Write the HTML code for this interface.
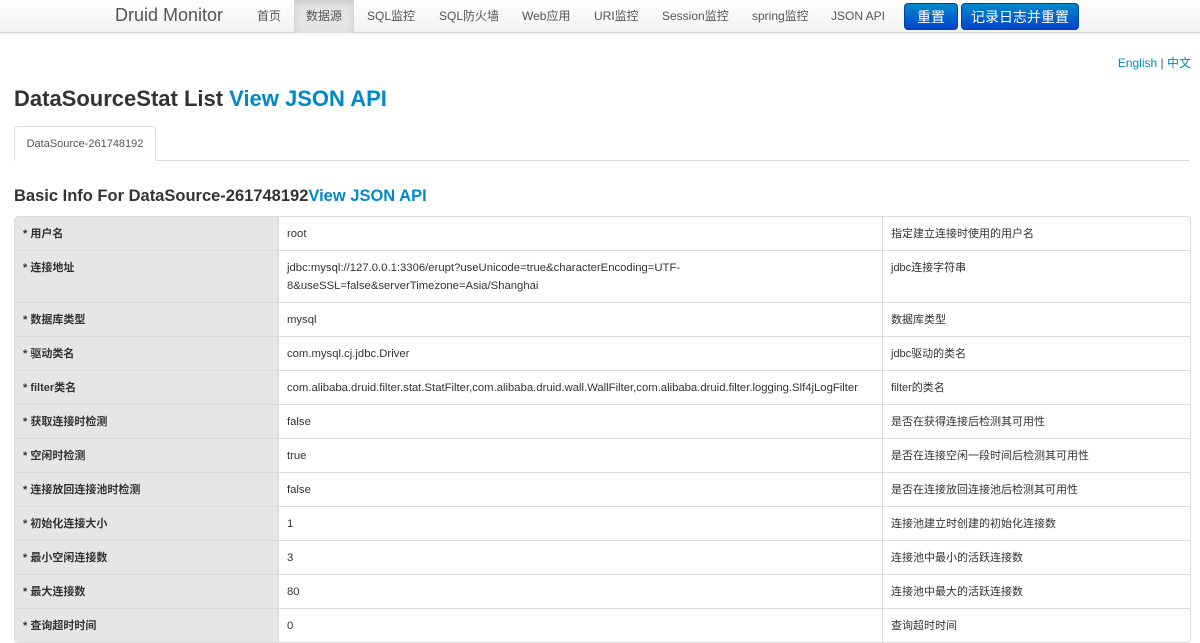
<!DOCTYPE html>
<html><head><meta charset="utf-8"><style>
*{box-sizing:border-box;margin:0;padding:0}
body{width:1200px;height:636px;overflow:hidden;background:#fff;font-family:"Liberation Sans","Noto Sans CJK SC",sans-serif;font-size:12px;color:#333;position:relative}
.nav{position:absolute;left:0;top:0;width:1200px;height:33px;background:linear-gradient(#fff,#f2f2f2);border-bottom:1px solid #d4d4d4;box-shadow:0 1px 4px rgba(0,0,0,.065)}
.brand{position:absolute;left:115px;top:5px;font-size:18px;color:#555}
.nav a{position:absolute;top:0;height:33px;line-height:32px;color:#555;font-size:12px;text-decoration:none}
.act{background:#e5e5e5;box-shadow:inset 0 3px 8px rgba(0,0,0,.12)}
.btn{position:absolute;top:3px;height:27px;line-height:26px;color:#fff;font-size:14px;text-align:center;border-radius:4px;background:linear-gradient(#0088cc,#0044cc);border:1px solid #0044aa}
.lang{position:absolute;right:9px;top:54px;color:#0088cc}
.lang span{color:#555}
h1{position:absolute;left:14px;top:86px;font-size:22px;font-weight:bold;color:#333}
h1 b,h2 b{color:#0088cc}
.tabs{position:absolute;left:14px;top:126px;width:1176px;height:35px;border-bottom:1px solid #ddd}
.tab{position:absolute;left:0;top:0;width:142px;height:35px;border:1px solid #ddd;border-bottom-color:#fff;border-radius:4px 4px 0 0;background:#fff;text-align:center;line-height:34px;color:#555;font-size:11px}
h2{position:absolute;left:14px;top:187px;font-size:16.5px;font-weight:bold}
table{position:absolute;left:14px;top:216px;width:1177px;border-collapse:separate;border-spacing:0;border:1px solid #ddd;border-radius:4px;font-size:11px}
td{padding:8px 8px 7px;line-height:18px;border-top:1px solid #ddd;vertical-align:top}
tr:first-child td{border-top:0}
td.k{width:263px;background:#e6e6e6;font-weight:bold}
td.v{width:604px;border-left:1px solid #ddd;font-size:11.3px}
td.d{border-left:1px solid #ddd}
</style></head><body>
<div class="nav">
<div class="brand">Druid Monitor</div>
<a style="left:257px">首页</a>
<a class="act" style="left:294px;width:60px;text-align:center">数据源</a>
<a style="left:367px">SQL监控</a>
<a style="left:439px">SQL防火墙</a>
<a style="left:522px">Web应用</a>
<a style="left:594px">URI监控</a>
<a style="left:662px">Session监控</a>
<a style="left:752px">spring监控</a>
<a style="left:831px">JSON API</a>
<div class="btn" style="left:904px;width:54px">重置</div>
<div class="btn" style="left:961px;width:118px">记录日志并重置</div>
</div>
<div class="lang">English <span>|</span> 中文</div>
<h1>DataSourceStat List <b>View JSON API</b></h1>
<div class="tabs"><div class="tab">DataSource-261748192</div></div>
<h2>Basic Info For DataSource-261748192<b>View JSON API</b></h2>
<table>
<tr><td class="k">* 用户名</td><td class="v">root</td><td class="d">指定建立连接时使用的用户名</td></tr>
<tr><td class="k">* 连接地址</td><td class="v">jdbc:mysql://127.0.0.1:3306/erupt?useUnicode=true&amp;characterEncoding=UTF-<br>8&amp;useSSL=false&amp;serverTimezone=Asia/Shanghai</td><td class="d">jdbc连接字符串</td></tr>
<tr><td class="k">* 数据库类型</td><td class="v">mysql</td><td class="d">数据库类型</td></tr>
<tr><td class="k">* 驱动类名</td><td class="v">com.mysql.cj.jdbc.Driver</td><td class="d">jdbc驱动的类名</td></tr>
<tr><td class="k">* filter类名</td><td class="v" style="white-space:nowrap">com.alibaba.druid.filter.stat.StatFilter,com.alibaba.druid.wall.WallFilter,com.alibaba.druid.filter.logging.Slf4jLogFilter</td><td class="d">filter的类名</td></tr>
<tr><td class="k">* 获取连接时检测</td><td class="v">false</td><td class="d">是否在获得连接后检测其可用性</td></tr>
<tr><td class="k">* 空闲时检测</td><td class="v">true</td><td class="d">是否在连接空闲一段时间后检测其可用性</td></tr>
<tr><td class="k">* 连接放回连接池时检测</td><td class="v">false</td><td class="d">是否在连接放回连接池后检测其可用性</td></tr>
<tr><td class="k">* 初始化连接大小</td><td class="v">1</td><td class="d">连接池建立时创建的初始化连接数</td></tr>
<tr><td class="k">* 最小空闲连接数</td><td class="v">3</td><td class="d">连接池中最小的活跃连接数</td></tr>
<tr><td class="k">* 最大连接数</td><td class="v">80</td><td class="d">连接池中最大的活跃连接数</td></tr>
<tr><td class="k">* 查询超时时间</td><td class="v">0</td><td class="d">查询超时时间</td></tr>
</table>
</body></html>
